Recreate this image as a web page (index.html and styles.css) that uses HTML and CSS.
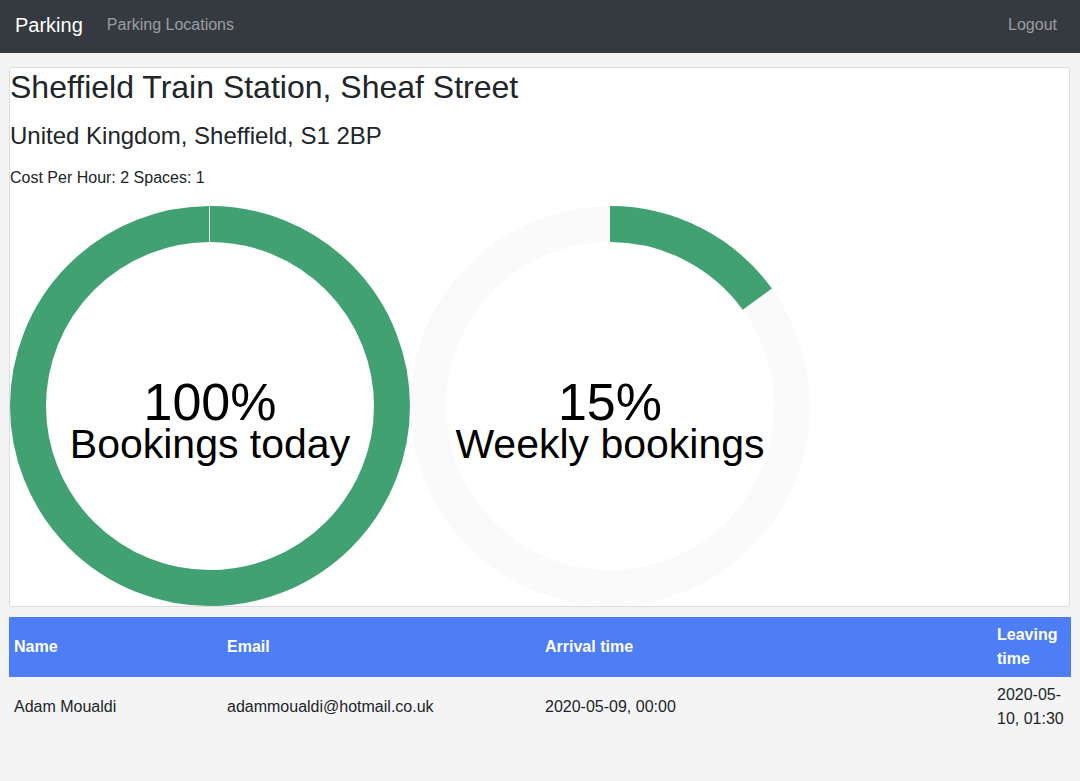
FILE: index.html
```html
<!DOCTYPE html>
<html lang="en">
<head>
<meta charset="utf-8">
<title>Parking</title>
<link rel="stylesheet" href="styles.css">
</head>
<body>
<nav class="navbar">
  <a class="brand" href="#">Parking</a>
  <a class="nav-link" href="#">Parking Locations</a>
  <span class="spacer"></span>
  <a class="nav-link" href="#">Logout</a>
</nav>
<main class="page">
  <section class="card">
    <h2 class="title">Sheffield Train Station, Sheaf Street</h2>
    <h4 class="subtitle">United Kingdom, Sheffield, S1 2BP</h4>
    <p class="meta">Cost Per Hour: 2 Spaces: 1</p>
    <div class="charts">
      <svg class="donut" width="400" height="400" viewBox="0 0 400 400">
        <circle class="track" cx="200" cy="200" r="182"></circle>
        <circle class="arc" cx="200" cy="200" r="182" stroke-dasharray="1143.54 1143.54" transform="rotate(-90 200 200)"></circle>
        <line class="seam" x1="199.5" y1="0" x2="199.5" y2="36"></line>
        <text class="pct" x="200" y="214">100%</text>
        <text class="label" x="200" y="252">Bookings today</text>
      </svg>
      <svg class="donut" width="400" height="400" viewBox="0 0 400 400">
        <circle class="track" cx="200" cy="200" r="182"></circle>
        <circle class="arc" cx="200" cy="200" r="182" stroke-dasharray="171.53 1143.54" transform="rotate(-90 200 200)"></circle>
        <text class="pct" x="200" y="214">15%</text>
        <text class="label" x="200" y="252">Weekly bookings</text>
      </svg>
    </div>
  </section>
  <table class="bookings">
    <colgroup>
      <col class="c-name"><col class="c-email"><col class="c-arrival"><col class="c-leaving">
    </colgroup>
    <thead>
      <tr><th>Name</th><th>Email</th><th>Arrival time</th><th>Leaving time</th></tr>
    </thead>
    <tbody>
      <tr><td>Adam Moualdi</td><td>adammoualdi@hotmail.co.uk</td><td>2020-05-09, 00:00</td><td>2020-05-10, 01:30</td></tr>
    </tbody>
  </table>
</main>
</body>
</html>
```

FILE: styles.css
```css
* { box-sizing: border-box; }
html, body { margin: 0; padding: 0; }
body {
  background: #f4f4f4;
  font-family: "Liberation Sans", Arial, sans-serif;
  font-size: 16px;
  line-height: 1.5;
  color: #212529;
}
.navbar {
  display: flex;
  align-items: center;
  height: 53px;
  padding: 0 15px 4px 15px;
  background: #343a40;
}
.brand {
  color: #fff;
  font-size: 20px;
  text-decoration: none;
  margin-right: 16px;
}
.nav-link {
  color: rgba(255, 255, 255, 0.5);
  text-decoration: none;
  padding: 0 8px;
}
.spacer { flex: 1; }
.page {
  padding: 14px 9px 0 9px;
}
.card {
  background: #fff;
  border: 1px solid #dcdcdc;
  border-radius: 3px;
  margin-right: 1px;
}
.title {
  margin: 0;
  font-size: 32px;
  font-weight: 400;
  line-height: 38px;
}
.subtitle {
  margin: 15px 0 0 0;
  font-size: 24px;
  font-weight: 400;
  line-height: 29px;
}
.meta {
  margin: 16px 0 0 0;
  line-height: 24px;
}
.charts {
  display: flex;
  margin-top: 16px;
}
.donut { display: block; }
.track {
  fill: none;
  stroke: #fafafa;
  stroke-width: 36;
}
.arc {
  fill: none;
  stroke: #41a172;
  stroke-width: 36;
}
.seam {
  stroke: #e6f2ea;
  stroke-width: 1;
}
.pct {
  font-family: "Liberation Sans", Arial, sans-serif;
  font-size: 52px;
  text-anchor: middle;
  fill: #000;
}
.label {
  font-family: "Liberation Sans", Arial, sans-serif;
  font-size: 41px;
  text-anchor: middle;
  fill: #000;
}
.bookings {
  width: 100%;
  margin-top: 10px;
  border-collapse: collapse;
  table-layout: fixed;
}
.c-name { width: 213px; }
.c-email { width: 318px; }
.c-arrival { width: 452px; }
.c-leaving { width: 79px; }
.bookings th {
  background: #4d7ef8;
  color: #fff;
  font-weight: 700;
  text-align: left;
  padding: 6px 5px 6px 5px;
  line-height: 24px;
}
.bookings td {
  padding: 6px 5px 6px 5px;
  line-height: 24px;
  vertical-align: middle;
}
```
